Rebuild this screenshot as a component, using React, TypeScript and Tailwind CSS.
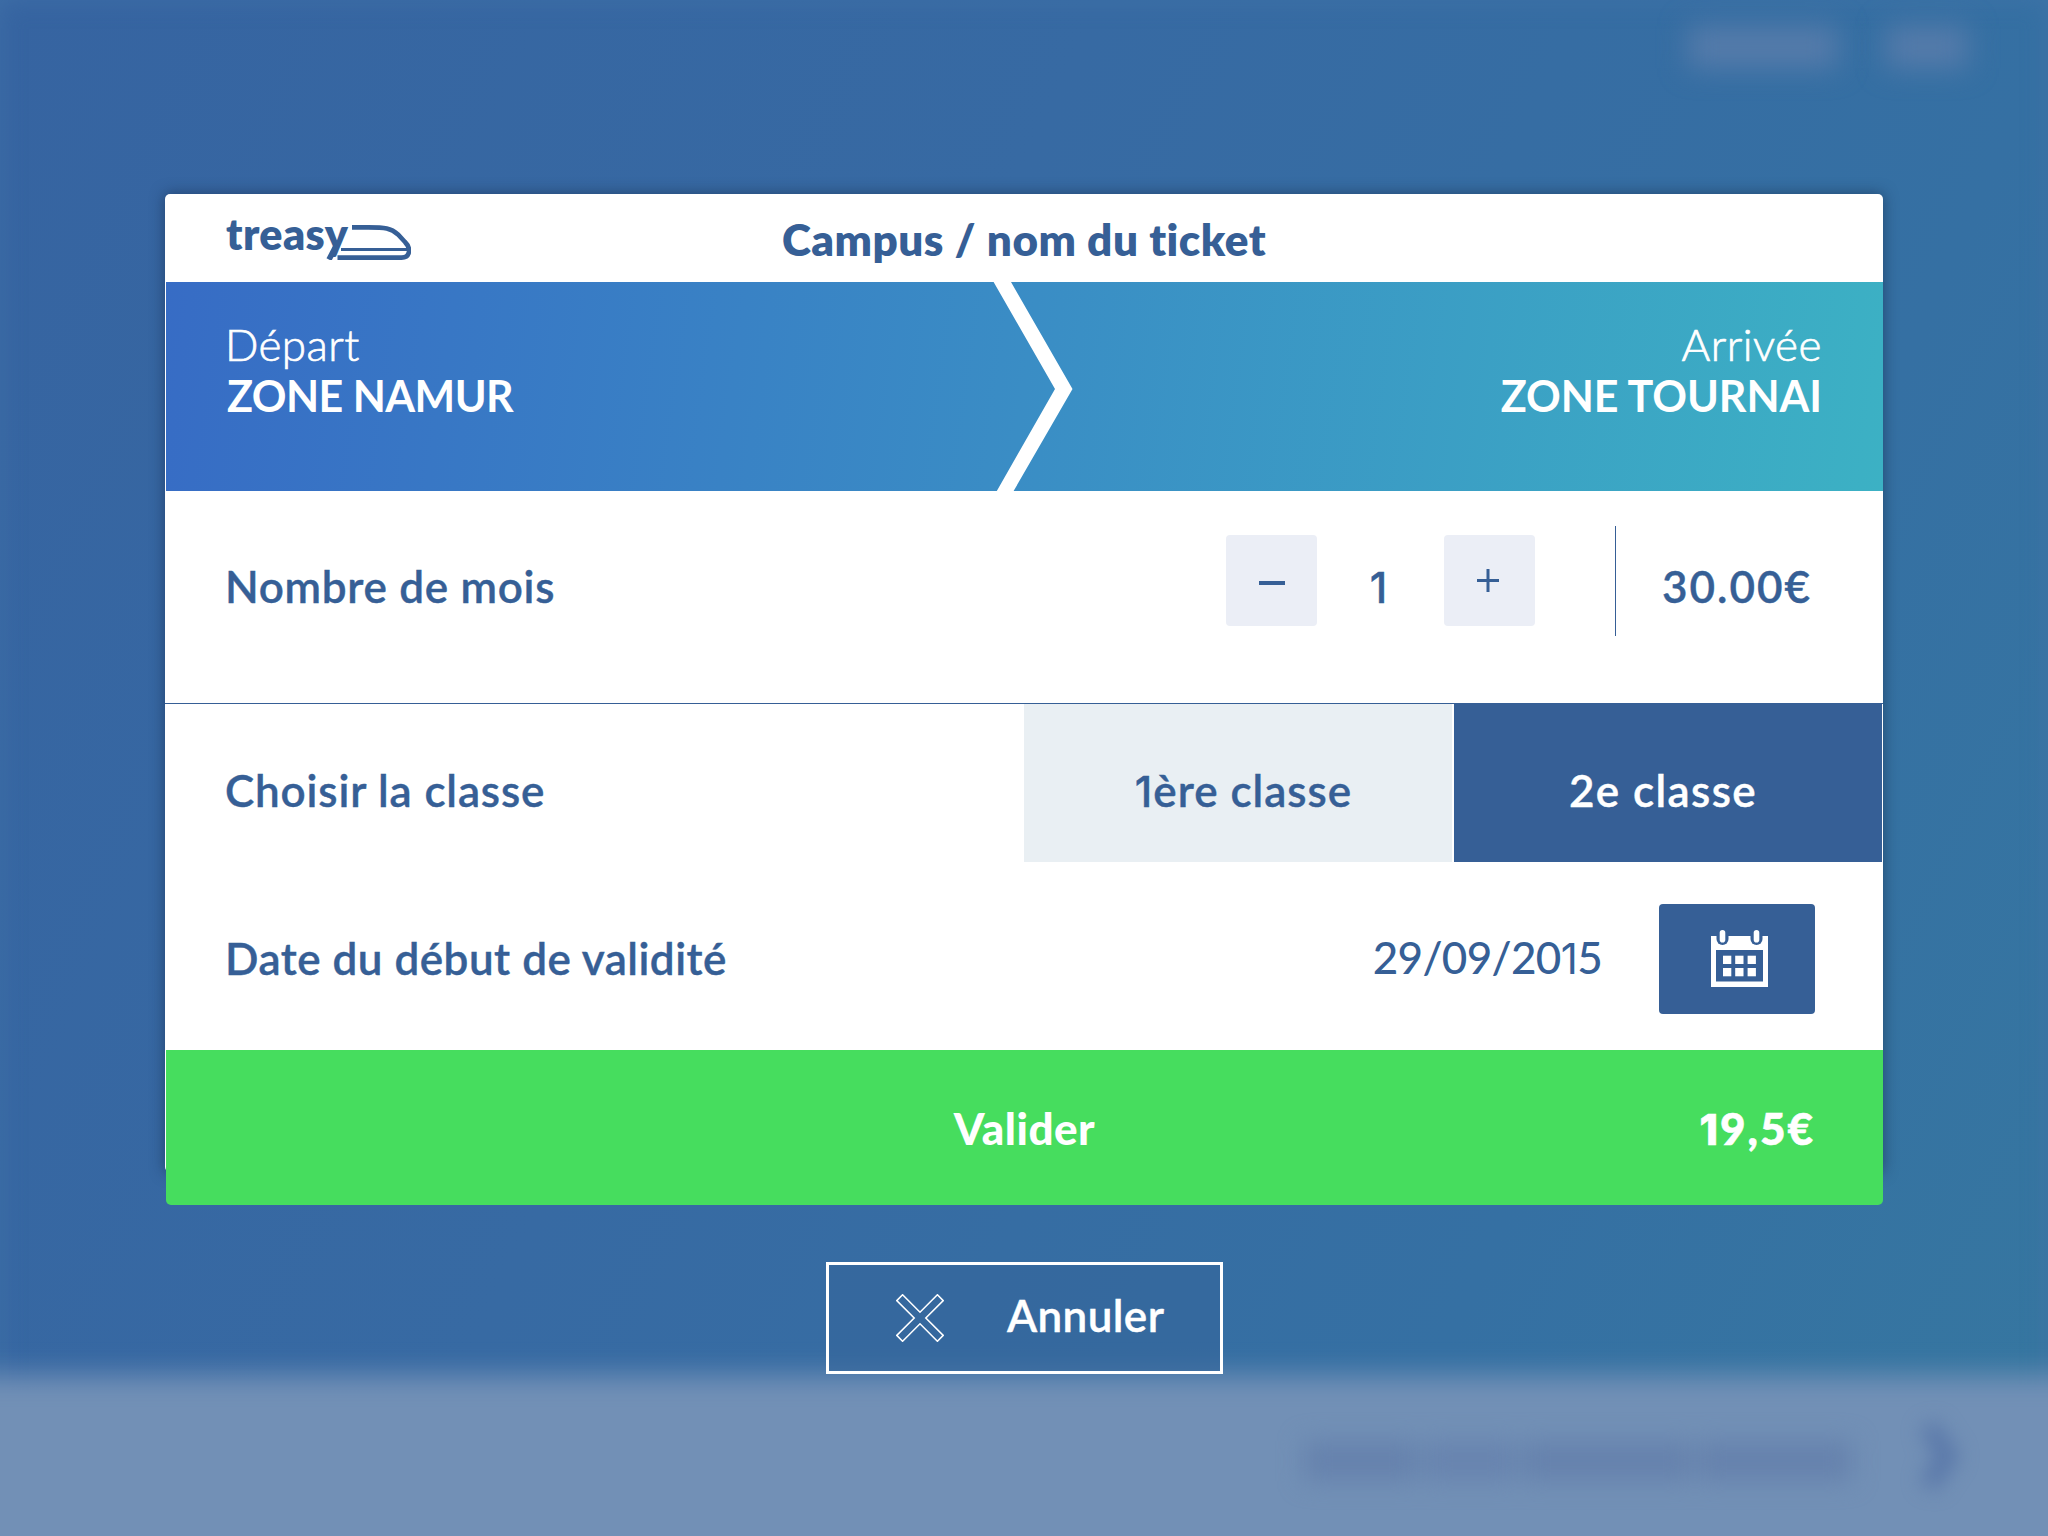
import type { ReactNode } from "react";

/* Footless numeral one, set in Inter beside the Lato text. */
function One({ className = "" }: { className?: string }) {
  return <span className={`font-[Inter] text-[42px] ${className}`}>1</span>;
}

function Logo() {
  return (
    <div className="relative h-[43px] w-[184px] text-[#365f96]">
      <span className="absolute left-[-1px] top-[-8px] text-[43px] leading-[50px] font-extrabold tracking-[0.4px]">
        treasy
      </span>
      <svg className="absolute inset-0" width="184" height="43" viewBox="0 0 184 43" fill="none" stroke="currentColor">
        <path d="M109.5 28L102 42.6" strokeWidth="5.6" />
        <path d="M125 10.4H141C158 10.4 164 11 171 17.5L178 25C184.5 31.5 183 40.6 174.5 40.6H110.5" strokeWidth="4.6" />
        <path d="M114 32.5H181" strokeWidth="3" />
      </svg>
    </div>
  );
}

function CalendarIcon() {
  return (
    <svg width="57" height="57" viewBox="0 0 57 57">
      <path fill="#fff" d="M0 6H57V57H0Z" />
      <path fill="#365f96" d="M5 20H52V51.5H5Z" />
      <rect x="5.5" y="-4" width="12" height="19" rx="6" fill="#365f96" />
      <rect x="39.5" y="-4" width="12" height="19" rx="6" fill="#365f96" />
      <rect x="8.7" y="0" width="5.6" height="12.5" rx="2.8" fill="#fff" />
      <rect x="42.7" y="0" width="5.6" height="12.5" rx="2.8" fill="#fff" />
      {[25.7, 38].map((y) =>
        [12, 24.2, 36.6].map((x) => <rect key={`${x}-${y}`} x={x} y={y} width="8.3" height="8.3" fill="#fff" />),
      )}
    </svg>
  );
}

function CrossIcon() {
  return (
    <svg width="48" height="48" viewBox="-0.8 -0.8 49.6 49.6" fill="none" stroke="#fff" strokeWidth="1.6">
      <path d="M0 6L6 0L24 18L42 0L48 6L30 24L48 42L42 48L24 30L6 48L0 42L18 24Z" />
    </svg>
  );
}

function StepButton({ children, label }: { children: ReactNode; label: string }) {
  return (
    <button aria-label={label} className="flex size-[91px] items-center justify-center rounded-[4px] bg-[#ebeef6]">
      {children}
    </button>
  );
}

function Backdrop() {
  return (
    <div className="absolute inset-0 overflow-hidden bg-[linear-gradient(115deg,#3664a1_0%,#376aa3_40%,#3570a3_75%,#3677a0_100%)]">
      <div className="absolute inset-0 shadow-[inset_0_0_24px_rgba(70,118,172,0.55)]" />
      <div className="absolute top-[26px] left-[1688px] h-[42px] w-[150px] bg-[#557baa] blur-[14px]" />
      <div className="absolute top-[26px] left-[1886px] h-[42px] w-[82px] bg-[#557baa] blur-[14px]" />
      <div className="absolute top-[1375px] -right-20 -left-20 h-[300px] bg-[#7290b6] blur-[14px]" />
      <div className="absolute top-[1441px] left-[1304px] flex h-[40px] gap-[6px] blur-[12px]">
        <div className="w-[114px] bg-[#6682ad]" />
        <div className="w-[92px] bg-[#6884af]" />
        <div className="w-[170px] bg-[#6682ad]" />
        <div className="w-[154px] bg-[#6682ad]" />
      </div>
      <svg className="absolute top-[1420px] left-[1916px] blur-[10px]" width="56" height="76" fill="none">
        <path d="M12 6L32 36L12 66" stroke="#5876a8" strokeWidth="18" />
      </svg>
    </div>
  );
}

export default function App() {
  return (
    <div className="relative h-[1536px] w-[2048px] overflow-hidden bg-[#376aa3] font-[Lato,sans-serif] text-[44px] leading-[52px] text-[#365f96]">
      <Backdrop />
      <div className="relative flex flex-col items-center pt-[194px]">
        <main className="h-[978px] w-[1718px] rounded-[5px] bg-white shadow-[0_0_14px_1px_rgba(20,40,70,0.5)]">
          <header className="grid h-[88px] grid-cols-[1fr_auto_1fr] items-center">
            <div className="pl-[62px]">
              <Logo />
            </div>
            <h1 className="pt-[2px] font-extrabold tracking-[0.5px]">Campus / nom du ticket</h1>
          </header>

          <section className="relative ml-px flex h-[209px] justify-between bg-[linear-gradient(98deg,#376cc5_0%,#3a8dc5_50%,#3cb1c4_100%)] pt-[36px] pr-[63px] pl-[61px] text-white">
            <div>
              <p className="-ml-[2px] font-light tracking-[0.4px] [-webkit-text-stroke:0.7px_white]">Départ</p>
              <p className="text-[43px] font-bold tracking-[-0.55px]">ZONE NAMUR</p>
            </div>
            <svg className="absolute top-0 left-[827px]" width="80" height="209" viewBox="0 0 80 209" fill="#fff">
              <path d="M0.6 0H18L79.5 107L20.6 209H3.8L62 107Z" />
            </svg>
            <div className="flex flex-col items-end">
              <p className="-mr-[2px] font-light tracking-[0.5px] [-webkit-text-stroke:0.7px_white]">Arrivée</p>
              <p className="-mr-[2px] text-[43px] font-bold tracking-[-0.05px]">ZONE TOURNAI</p>
            </div>
          </section>

          <section className="flex h-[213px] items-start border-b border-[#365f96] pt-[44px] pl-[60px] font-semibold">
            <span className="flex-1 leading-[103px] tracking-[0.7px] [-webkit-text-stroke:0.4px]">Nombre de mois</span>
            <StepButton label="Moins">
              <span className="mt-[5px] h-[3.5px] w-[26px] bg-[#365f96]" />
            </StepButton>
            <span className="w-[127px] text-center leading-[102px]">
              <One className="mr-[4px] font-medium [-webkit-text-stroke:0.4px]" />
            </span>
            <StepButton label="Plus">
              <svg className="-mt-[1px] -ml-[3px]" width="22" height="23" viewBox="0 0 22 23" stroke="#365f96" strokeWidth="3">
                <path d="M0 11.5H22M11 0V23" />
              </svg>
            </StepButton>
            <div className="-mt-[9px] ml-[80px] h-[110px] w-px bg-[#365f96]" />
            <span className="w-[267px] pl-[46px] leading-[103px] tracking-[2px] [-webkit-text-stroke:0.4px]">30.00€</span>
          </section>

          <section className="flex h-[158px] font-semibold leading-[173px] [-webkit-text-stroke:0.4px]">
            <span className="flex-1 pl-[60px] tracking-[0.85px]">Choisir la classe</span>
            <button className="h-[158px] w-[428px] bg-[#e9eff3] pl-[14px] leading-[173px] tracking-[1px]">
              <One className="-ml-[3px] font-medium" />
              ère classe
            </button>
            <button className="-mt-px mr-px ml-[2px] h-[159px] w-[428px] bg-[#365f96] pr-[10px] leading-[175px] tracking-[1.4px] text-white">
              2e classe
            </button>
          </section>

          <section className="flex h-[188px] items-center pr-[68px] pl-[60px]">
            <span className="flex-1 pt-[3px] font-semibold tracking-[0.5px] [-webkit-text-stroke:0.4px]">Date du début de validité</span>
            <span className="pt-[4px] font-medium tracking-[-0.65px]">
              29/09/20
              <One className="font-normal" />5
            </span>
            <button aria-label="Choisir une date" className="mt-[5px] ml-[57px] flex h-[110px] w-[156px] items-center justify-center rounded-[4px] bg-[#365f96]">
              <span className="ml-[5px]">
                <CalendarIcon />
              </span>
            </button>
          </section>

          <button className="ml-px grid h-[155px] w-[1717px] grid-cols-[1fr_auto_1fr] items-center rounded-b-[5px] bg-[#46dd5e] pr-[68px] font-black text-white">
            <span />
            <span className="pl-[68px] tracking-[0.5px]">Valider</span>
            <span className="pt-[2px] text-right tracking-[2px] [-webkit-text-stroke:0.6px]">
              <One className="font-extrabold" />
              9,5€
            </span>
          </button>
        </main>

        <button className="mt-[90px] ml-px flex h-[112px] w-[397px] items-center border-[3px] border-white bg-[#36659b]/60 pl-[67px] font-semibold text-white">
          <CrossIcon />
          <span className="ml-[63px] -mt-[6px] tracking-[0.4px] [-webkit-text-stroke:0.4px]">Annuler</span>
        </button>
      </div>
    </div>
  );
}
